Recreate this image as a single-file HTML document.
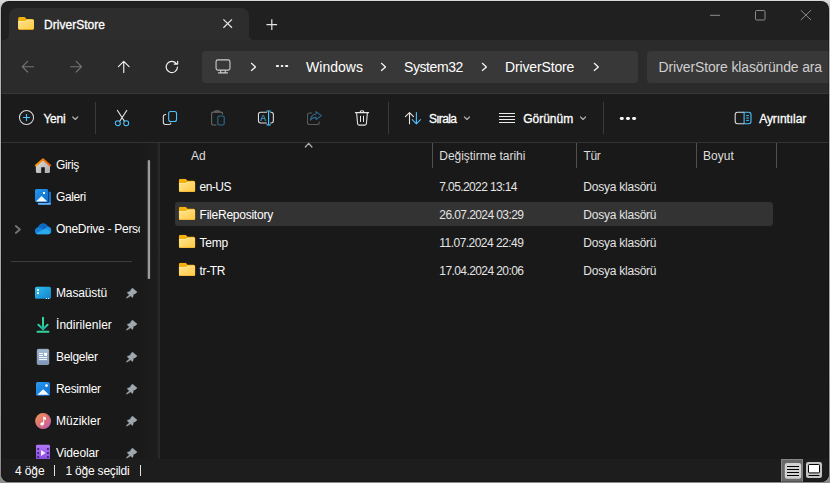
<!DOCTYPE html>
<html lang="tr">
<head>
<meta charset="utf-8">
<title>DriverStore</title>
<style>
html,body{margin:0;padding:0}
body{width:830px;height:483px;overflow:hidden;position:relative;background:linear-gradient(#dcdcdc 0,#d6d6d6 2px,#b8b8b8 10px,#b0b0b0 30%,#a4a4a4 70%,#8c8c8c 100%);font-family:'Liberation Sans',sans-serif}
.win{position:absolute;left:1px;top:1px;width:828px;height:480.5px;border-radius:8px;overflow:hidden;background:#202020}
.win:after{content:'';position:absolute;left:0;top:0;right:0;bottom:0;border-radius:8px;box-shadow:inset 0 0 0 1px rgba(0,0,0,.22);pointer-events:none}
.pg{position:absolute;left:-1px;top:-1px;width:830px;height:483px}
.pg *{position:absolute;box-sizing:border-box}
.t{white-space:pre;line-height:1;}
svg{overflow:visible}
.tab{left:9px;top:8px;width:240px;height:32px;background:#2d2d2d;border-radius:8px 8px 0 0}
.tabfl{top:35px;width:5px;height:5px;background:#2d2d2d}
.tabfl i{left:0;top:0;width:5px;height:5px;background:#202020}
.nav{left:0;top:40px;width:830px;height:53px;background:#2b2b2b}
.navline{left:0;top:93px;width:830px;height:1px;background:#373737}
.addr{left:202px;top:51px;width:436px;height:32px;background:#383838;border-radius:4px}
.search{left:647px;top:51px;width:200px;height:32px;background:#383838;border-radius:4px}
.cmd{left:0;top:94px;width:830px;height:48px;background:#1b1b1b}
.cmdline{left:0;top:142px;width:830px;height:1px;background:#333}
.vsep{width:1px;top:102px;height:32px;background:#3a3a3a}
.main{left:0;top:143px;width:830px;height:316px;background:#191919}
.side{left:139px;top:143px;width:20px;height:316px;background:linear-gradient(to right,#191919,#1e1e1e)}
.sidediv{left:158px;top:143px;width:2px;height:316px;background:#292929}
.thumb{left:148px;top:160px;width:2px;height:119px;background:#9a9a9a;border-radius:1px}
.sideline{left:11px;top:261px;width:121px;height:1px;background:#3d3d3d}
.hsep{width:1px;top:143px;height:25px;background:#505050}
.sel{left:175px;top:202px;width:598px;height:23.8px;background:#333;border-radius:3px}
.status{left:0;top:459px;width:830px;height:24px;background:#1d1d1d}
.bar{width:1px;top:465px;height:11px;background:#e0e0e0}
.vbtn{left:781px;top:459px;width:22px;height:24px;background:#696969;border:1px solid #868686}
</style>
</head>
<body>
<svg width="0" height="0" style="position:absolute">
 <defs>
  <linearGradient id="fg" x1="0" y1="0" x2="1" y2="1"><stop offset="0" stop-color="#ffe493"/><stop offset="1" stop-color="#ffc940"/></linearGradient>
  <symbol id="folder" viewBox="0 0 16.5 13.2">
   <path d="M0 1.7Q0 0 1.7 0H6.3Q7 0 7.4.5L8.6 2H14.8Q16.5 2 16.5 3.7V11.5Q16.5 13.2 14.8 13.2H1.7Q0 13.2 0 11.5Z" fill="#f2b10c"/>
   <path d="M0 4.2H6.9Q7.5 4.2 7.9 3.8L8.5 3.25Q8.9 2.95 9.4 2.95H14.8Q16.5 2.95 16.5 4.6V11.5Q16.5 13.2 14.8 13.2H1.7Q0 13.2 0 11.5Z" fill="url(#fg)"/>
   <path d="M0 4.2H6.9Q7.5 4.2 7.9 3.8L8.5 3.25Q8.9 2.95 9.4 2.95H14.8Q15.7 2.95 16.1 3.4Q15.7 3.4 14.8 3.4H9.5Q9.1 3.4 8.8 3.7L8.2 4.25Q7.8 4.65 7.1 4.65H0Z" fill="#fff2bc" opacity=".75"/>
   <path d="M0 11Q0 12.6 1.7 12.6H14.8Q16.5 12.6 16.5 11V11.5Q16.5 13.2 14.8 13.2H1.7Q0 13.2 0 11.5Z" fill="#eea412"/>
  </symbol>
  <symbol id="chev" viewBox="0 0 6 9"><path d="M1 .8L5.1 4.5L1 8.2" fill="none" stroke="#f2f2f2" stroke-width="1.3" stroke-linecap="round" stroke-linejoin="round"/></symbol>
  <symbol id="dchev" viewBox="0 0 7 5"><path d="M.95 1.1L3.45 3.6L5.95 1.1" fill="none" stroke="#a6a6a6" stroke-width="1.35" stroke-linecap="round" stroke-linejoin="round"/></symbol>
  <symbol id="pin" viewBox="0 0 12 12"><path d="M6.4 .4L11.2 4.6L9.3 6.2L7.65 6.8L6.6 10.15L4.55 8.5L.8 10.8L.2 9.95L3.3 7.45L1 5L4.35 3.5L5 1.9Z" fill="#9ea6ae" stroke="#9ea6ae" stroke-width=".3" stroke-linejoin="round"/></symbol>
 </defs>
</svg>
<div class="win"><div class="pg">

<!-- title bar / tab -->
<div class="tabfl" style="left:4px"><i style="border-radius:0 0 5px 0"></i></div>
<div class="tabfl" style="left:249px"><i style="border-radius:0 0 0 5px"></i></div>
<div class="tab"></div>
<svg style="left:18px;top:17px" width="18" height="14" viewBox="0 0 18 14"><use href="#folder" width="16.1" height="12.7" preserveAspectRatio="none"/></svg>
<span class="t" style="left:44.0px;top:18.84px;font-size:12px;color:#fff;letter-spacing:0.028px;-webkit-text-stroke:.3px #fff;">DriverStore</span>
<svg style="left:223px;top:19px" width="10" height="10" viewBox="0 0 10 10"><path d="M.4 .4L9 8.8M9 .4L.4 8.8" stroke="#e8e8e8" stroke-width="1.2" fill="none"/></svg>
<svg style="left:266px;top:19px" width="12" height="11" viewBox="-0.5 -0.3 12 11"><path d="M5.3 0V10.6M0 5.3H10.6" stroke="#e4e4e4" stroke-width="1.2" fill="none"/></svg>
<svg style="left:710px;top:10px" width="103" height="12" viewBox="0 0 103 12"><g stroke="#8c8c8c" stroke-width="1" fill="none"><path d="M0 5.3H10"/><rect x="45.5" y=".5" width="9.5" height="9.5" rx="1.1"/><path d="M90.8 .2L101 10M101 .2L90.8 10"/></g></svg>

<!-- navigation bar -->
<div class="nav"></div>
<div class="navline"></div>
<svg style="left:21px;top:60px" width="63" height="15" viewBox="0 0 63 15"><g stroke="#767676" stroke-width="1.15" fill="none" stroke-linecap="round" stroke-linejoin="round"><path d="M12.5 6.7H1.3M6.6 1.4L1.3 6.7L6.6 12"/><path d="M49.6 6.7H60.5M55.2 1.4L60.5 6.7L55.2 12"/></g></svg>
<svg style="left:117px;top:60px" width="63" height="15" viewBox="0 0 63 15"><g stroke="#f0f0f0" stroke-width="1.15" fill="none" stroke-linecap="round" stroke-linejoin="round"><path d="M6.75 12.4V1.4M1.4 6.7L6.75 1.4L12.1 6.7"/><path d="M60.5 7.1A5.65 5.65 0 1 1 59.6 3.9M60.65 1.2V4.1H57.2"/></g></svg>
<div class="addr"></div>
<svg style="left:215px;top:59px" width="16" height="15" viewBox="-0.5 -0.3 16 15"><g stroke="#cdcdcd" stroke-width="1.1" fill="none"><rect x=".55" y=".55" width="13.9" height="10.3" rx="1.8"/><path d="M5.2 10.9V13.5M9.8 10.9V13.5M2.6 13.6H12.4"/></g></svg>
<svg style="left:250px;top:62px" width="7" height="10" viewBox="-0.45 -0.4 7 10"><use href="#chev" width="6" height="9"/></svg>
<svg style="left:276px;top:64px" width="13" height="4" viewBox="0 -0.8 13 4"><g fill="#f0f0f0"><rect x="0" y=".2" width="2.9" height="2" rx=".5"/><rect x="4.9" y=".2" width="2.3" height="2" rx=".5"/><rect x="9.2" y=".2" width="2.9" height="2" rx=".5"/></g></svg>
<span class="t" style="left:306.0px;top:60.15px;font-size:14px;color:#fff;letter-spacing:0.029px;">Windows</span>
<svg style="left:380px;top:62px" width="7" height="10" viewBox="-0.45 -0.4 7 10"><use href="#chev" width="6" height="9"/></svg>
<span class="t" style="left:404.0px;top:60.15px;font-size:14px;color:#fff;letter-spacing:-0.406px;">System32</span>
<svg style="left:481px;top:62px" width="7" height="10" viewBox="-0.35 -0.4 7 10"><use href="#chev" width="6" height="9"/></svg>
<span class="t" style="left:505.0px;top:60.15px;font-size:14px;color:#fff;letter-spacing:-0.145px;">DriverStore</span>
<svg style="left:593px;top:62px" width="7" height="10" viewBox="-0.25 -0.4 7 10"><use href="#chev" width="6" height="9"/></svg>
<div class="search"></div>
<span class="t" style="left:658.5px;top:60.15px;font-size:14px;color:#cfcfcf;letter-spacing:-0.146px;">DriverStore klasöründe ara</span>

<!-- command bar -->
<div class="cmd"></div>
<div class="cmdline"></div>
<svg style="left:18px;top:109px" width="17" height="17" viewBox="-0.9 -0.9 17 17"><circle cx="7.6" cy="7.6" r="7.05" fill="none" stroke="#dcdcdc" stroke-width="1.05"/><path d="M7.6 4.5V10.7M4.5 7.6H10.7" stroke="#4cc2ff" stroke-width="1.15" fill="none" stroke-linecap="round"/></svg>
<span class="t" style="left:43.4px;top:112.64px;font-size:12px;color:#fff;letter-spacing:-0.230px;-webkit-text-stroke:.3px #fff;">Yeni</span>
<svg style="left:71px;top:115px" width="8" height="6" viewBox="-0.8 -0.8 8 6"><use href="#dchev" width="7" height="5"/></svg>
<div class="vsep" style="left:95px"></div>
<!-- cut -->
<svg style="left:114px;top:109px" width="16" height="18" viewBox="-0.5 -0.5 16 18"><g fill="none" stroke-width="1.05"><path d="M2.9 .9L9.9 11.6M12.3 .9L5.3 11.6" stroke="#dcdcdc" stroke-linecap="round"/><circle cx="3.3" cy="13.7" r="2.5" stroke="#4cc2ff"/><circle cx="11.7" cy="13.7" r="2.5" stroke="#4cc2ff"/></g></svg>
<!-- copy -->
<svg style="left:162px;top:110px" width="16" height="16" viewBox="-0.8 -0.5 16 16"><g fill="none" stroke-width="1.1"><path d="M3.4 4.05H2.7Q.55 4.05 .55 6.2V11.8Q.55 13.95 2.7 13.95H6.2Q8.15 13.95 8.15 12.2" stroke="#dcdcdc"/><rect x="5.85" y=".95" width="7.9" height="10" rx="2" stroke="#4cc2ff"/></g></svg>
<!-- paste (disabled) -->
<svg style="left:210px;top:110px" width="16" height="17" viewBox="-0.8 0 16 17"><g fill="none" stroke-width="1.05"><path d="M5.6 15H2.4Q.85 15 .85 13.5V3.6Q.85 2.1 2.4 2.1H10.2Q11.75 2.1 11.75 3.6V4.6" stroke="#6c6c6c"/><path d="M3.9 2.1Q3.9 .85 5.1 .85H7.5Q8.7 .85 8.7 2.1" stroke="#6c6c6c"/><rect x="7" y="5.9" width="6.4" height="9.1" rx="1.5" stroke="#2b6f95"/></g></svg>
<!-- rename -->
<svg style="left:257px;top:109px" width="18" height="18" viewBox="-0.5 -0.8 18 18"><g fill="none" stroke-width="1.1"><path d="M9.4 2.5H3.1Q.95 2.5 .95 4.7V11Q.95 13.2 3.1 13.2H9.4M12.8 2.5H13.7Q15.85 2.5 15.85 4.7V11Q15.85 13.2 13.7 13.2H12.8" stroke="#dcdcdc"/><path d="M9 1.2H13.2M9 15H13.2M11.1 1.2V15" stroke="#4cc2ff" stroke-width="1.2"/></g><text x="2.7" y="11" font-family="'Liberation Sans',sans-serif" font-size="8.8" fill="#4cc2ff">A</text></svg>
<!-- share (disabled) -->
<svg style="left:306px;top:110px" width="17" height="16" viewBox="-0.5 -0.5 17 16"><g fill="none" stroke-width="1.05" stroke-linejoin="round"><path d="M5.6 2.5H3.1Q1 2.5 1 4.6V11.9Q1 14 3.1 14H10.6Q12.7 14 12.7 11.9V11" stroke="#5c5c5c"/><path d="M9.6 1.1L14.9 5.1L9.6 9V6.9Q5.8 6.8 3.9 9.6Q4.4 4 9.6 3.4Z" stroke="#2a6b90"/></g></svg>
<!-- delete -->
<svg style="left:354px;top:109px" width="16" height="18" viewBox="-0.5 -0.8 16 18"><g fill="none" stroke="#e6e6e6" stroke-width="1.1" stroke-linecap="round"><path d="M.9 2.8H14.1M5.5 2.6Q5.5 .95 7.5 .95Q9.5 .95 9.5 2.6M2.1 3L3.1 14Q3.2 15.3 4.6 15.3H10.4Q11.8 15.3 11.9 14L12.9 3"/><path d="M6 6.4V11.7M9 6.4V11.7" stroke-width="1"/></g></svg>
<div class="vsep" style="left:388px"></div>
<!-- sort -->
<svg style="left:404px;top:111px" width="18" height="14" viewBox="-0.5 -0.6 18 14"><g fill="none" stroke-width="1.1" stroke-linecap="round" stroke-linejoin="round"><path d="M5 12.2V1M.9 5.1L5 1L9 5.1" stroke="#e6e6e6"/><path d="M11.9 1V12.2M7.8 8.1L11.9 12.2L16 8.1" stroke="#4cc2ff"/></g></svg>
<span class="t" style="left:428.9px;top:112.64px;font-size:12px;color:#fff;letter-spacing:-0.677px;-webkit-text-stroke:.3px #fff;">Sırala</span>
<svg style="left:463px;top:115px" width="8" height="6" viewBox="-0.5 -0.8 8 6"><use href="#dchev" width="7" height="5"/></svg>
<!-- view -->
<svg style="left:499px;top:113px" width="17" height="11" viewBox="0 0 17 11" shape-rendering="crispEdges"><path d="M0 .5H16M0 3.5H16M0 6.5H16M0 9.5H16" stroke="#e9e9e9" stroke-width="1" fill="none"/></svg>
<span class="t" style="left:523.2px;top:112.64px;font-size:12px;color:#fff;-webkit-text-stroke:.3px #fff;">Görünüm</span>
<svg style="left:579px;top:115px" width="8" height="6" viewBox="-0.6 -0.8 8 6"><use href="#dchev" width="7" height="5"/></svg>
<div class="vsep" style="left:603px"></div>
<svg style="left:619px;top:117px" width="18" height="4" viewBox="-0.8 0 18 4"><g fill="#f4f4f4"><rect x="0" y="0" width="4" height="3" rx="1.4"/><rect x="6.15" y="0" width="4" height="3" rx="1.4"/><rect x="12.3" y="0" width="4" height="3" rx="1.4"/></g></svg>
<!-- details pane -->
<svg style="left:734px;top:111px" width="18" height="14" viewBox="-0.6 -0.7 18 14"><g fill="none" stroke-width="1.1"><path d="M9.5 .6H3Q.6 .6 .6 3V9.6Q.6 12 3 12H9.5" stroke="#dcdcdc"/><path d="M9.5 .6V12H14Q16.4 12 16.4 9.6V3Q16.4 .6 14 .6Z" stroke="#4cc2ff"/><path d="M11.6 3.9H14.3M11.6 6.3H14.3M11.6 8.7H14.3" stroke="#4cc2ff" stroke-width="1"/></g></svg>
<span class="t" style="left:759.2px;top:112.64px;font-size:12px;color:#fff;letter-spacing:-0.080px;-webkit-text-stroke:.3px #fff;">Ayrıntılar</span>

<!-- main area -->
<div class="main"></div>
<div class="side">
</div>
<div class="sidediv"></div>
<svg style="left:147px;top:159px" width="4" height="121" viewBox="-0.7 -0.9 4 121"><rect width="2.4" height="119.2" rx="1.2" fill="#9c9c9c"/></svg>
<div class="sideline"></div>

<!-- sidebar icons -->
<svg style="left:34px;top:157px" width="18" height="17" viewBox="-0.5 -0.5 18 17"><defs><linearGradient id="hg" x1="0" y1="0" x2="1" y2="1"><stop offset="0" stop-color="#dedede"/><stop offset="1" stop-color="#a9a9a9"/></linearGradient><linearGradient id="hr" x1="0" y1="0" x2="1" y2="0"><stop offset="0" stop-color="#f59a00"/><stop offset="1" stop-color="#e8590a"/></linearGradient></defs><path d="M1.4 8L8.5 2L15.5 8V14.3Q15.5 15.4 14.4 15.4H10.3V9.7H6.7V15.4H2.5Q1.4 15.4 1.4 14.3Z" fill="url(#hg)"/><path d="M1.3 7.9L8.5 1.8L15.7 7.9" fill="none" stroke="url(#hr)" stroke-width="2" stroke-linecap="round" stroke-linejoin="round"/></svg>
<svg style="left:35px;top:189px" width="17" height="17" viewBox="0 0 17 17"><defs><linearGradient id="gg" x1="0" y1="0" x2="1" y2="1"><stop offset="0" stop-color="#2398ee"/><stop offset="1" stop-color="#0e6cc8"/></linearGradient></defs><rect x="2.6" y="2.4" width="13.4" height="13.4" rx="1.6" fill="#1276d2"/><path d="M3 14H16V14.4Q16 15.8 14.6 15.8H4.2Q3 15.8 3 14.6Z" fill="#63adf2"/><rect x=".8" y=".8" width="13.1" height="12.9" rx="1.6" fill="#08182c" opacity=".85"/><rect x="0" y="0" width="13.2" height="13" rx="1.6" fill="url(#gg)"/><path d="M1 12.6L6.6 7L12.3 12.6Z" fill="#f4f9ff"/><rect x="8" y="3" width="2" height="2" fill="#fff"/></svg>
<svg style="left:14px;top:224px" width="8" height="11" viewBox="-0.5 -0.7 8 11"><path d="M1.3 1.3L5.4 4.8L1.3 8.3" fill="none" stroke="#757575" stroke-width="1.8" stroke-linecap="round" stroke-linejoin="round"/></svg>
<svg style="left:34px;top:223px" width="18" height="12" viewBox="-0.8 -0.4 18 12"><path d="M2.8 10.8Q.1 10.6 .1 7.6Q.2 4.5 3.5 3.5Q5 .1 8.4 .1Q11.7 .1 12.9 3.1Q16.4 3.6 16.4 7.4Q16.3 10.6 13.6 10.8Z" fill="#147fd8"/><path d="M3.5 3.5Q5 .1 8.4 .1Q11.7 .1 12.9 3.1Q11.6 3.6 11.2 4.9L8.6 6.4L5.6 4.2Q4.6 3.5 3.5 3.5Z" fill="#0b67c2"/><path d="M12.9 3.1Q16.4 3.6 16.4 7.4L16.2 8.6L11.2 4.9Q11.7 3.5 12.9 3.1Z" fill="#1c93e4"/><path d="M1.1 9.9L11.2 4.9L16.2 8.6Q15.7 10.7 13.6 10.8H2.8Q1.7 10.8 1.1 9.9Z" fill="#2aa9ec"/></svg>
<svg style="left:35px;top:286px" width="17" height="14" viewBox="0 -0.8 17 14"><defs><linearGradient id="dg" x1="0" y1="0" x2="1" y2="1"><stop offset="0" stop-color="#2dc0ec"/><stop offset="1" stop-color="#1280cc"/></linearGradient></defs><rect width="16" height="12" rx="1.6" fill="url(#dg)"/><rect x="2" y="2.3" width="2" height="1.9" fill="#fff"/><rect x="2" y="5.4" width="2" height="1.9" fill="#fff"/><rect x="10.9" y="11.2" width="1.1" height="1" fill="#e8f4ff"/><rect x="13" y="11.2" width="1.1" height="1" fill="#e8f4ff"/></svg>
<svg style="left:36px;top:316px" width="14" height="18" viewBox="-0.5 -0.8 14 18"><defs><linearGradient id="dl" x1="0" y1="0" x2="0" y2="1"><stop offset="0" stop-color="#33dc98"/><stop offset=".55" stop-color="#2ccf9c"/><stop offset=".8" stop-color="#1ba2b2"/><stop offset=".86" stop-color="#2fd69a"/><stop offset="1" stop-color="#2fd69a"/></linearGradient></defs><path d="M6.5 .9V12.2M1.9 8L6.5 12.4L11.1 8M1 15H12" fill="none" stroke="url(#dl)" stroke-width="2" stroke-linecap="round" stroke-linejoin="round"/></svg>
<svg style="left:37px;top:349px" width="13" height="16" viewBox="0 0 13 16"><defs><linearGradient id="dc" x1="0" y1="0" x2="0" y2="1"><stop offset="0" stop-color="#a4bad4"/><stop offset="1" stop-color="#7c98ba"/></linearGradient></defs><rect x=".25" y=".25" width="11.5" height="15.3" rx="1.2" fill="url(#dc)" stroke="#bccde2" stroke-width=".6"/><path d="M2 4.5H5.9M2 6.5H5.9M2 8.6H10M2 10.6H10" stroke="#fff" stroke-width="1" fill="none"/><rect x="7.1" y="3.9" width="2.9" height="2.9" fill="#fff"/></svg>
<svg style="left:36px;top:382px" width="15" height="15" viewBox="0 0 15 15"><defs><linearGradient id="pg" x1="0" y1="0" x2="1" y2="1"><stop offset="0" stop-color="#2b9cf2"/><stop offset="1" stop-color="#0d6acc"/></linearGradient></defs><rect width="14" height="13.8" rx="1.6" fill="url(#pg)"/><path d="M1.3 12.8L7.2 7.2L13 12.8Z" fill="#f4f9ff"/><circle cx="10.5" cy="3.6" r="1.35" fill="#fff"/></svg>
<svg style="left:35px;top:413px" width="17" height="17" viewBox="0 0 17 17"><defs><linearGradient id="mg" x1=".1" y1=".1" x2=".9" y2=".95"><stop offset="0" stop-color="#f0905a"/><stop offset=".55" stop-color="#d86e78"/><stop offset="1" stop-color="#bc5eb8"/></linearGradient></defs><circle cx="8.1" cy="8.1" r="8" fill="url(#mg)"/><ellipse cx="7.1" cy="10.9" rx="1.8" ry="1.6" fill="#fff"/><path d="M8.2 11V3.6L11 4.6V6.9L9.1 6.2V11Z" fill="#fff"/></svg>
<svg style="left:36px;top:444px" width="15" height="16" viewBox="0 -0.8 15 16"><defs><linearGradient id="vg" x1="0" y1="0" x2="0" y2="1"><stop offset="0" stop-color="#b278f6"/><stop offset="1" stop-color="#8c4ee0"/></linearGradient></defs><path d="M0 1.4Q0 0 1.4 0H12.6Q14 0 14 1.4V14.2H0Z" fill="url(#vg)"/><g fill="#3d1f75"><rect x="1.3" y="3.3" width="1.8" height="1.8"/><rect x="1.3" y="7.3" width="1.8" height="1.8"/><rect x="1.3" y="11.3" width="1.8" height="1.8"/><rect x="11" y="3.3" width="1.8" height="1.8"/><rect x="11" y="7.3" width="1.8" height="1.8"/><rect x="11" y="11.3" width="1.8" height="1.8"/></g><path d="M5 5.2L9.6 8.2L5 11.2Z" fill="#f2ecff"/></svg>
<span class="t" style="left:56.0px;top:158.84px;font-size:12px;color:#fff;letter-spacing:-0.334px;">Giriş</span><span class="t" style="left:56.0px;top:190.84px;font-size:12px;color:#fff;letter-spacing:-0.386px;">Galeri</span><div style="left:56px;top:220px;width:84.3px;height:20px;overflow:hidden"><span class="t" style="left:0;top:2.84px;font-size:12px;color:#fff;letter-spacing:-0.28px">OneDrive - Personal</span></div>
<span class="t" style="left:56.0px;top:286.84px;font-size:12px;color:#fff;letter-spacing:-0.129px;">Masaüstü</span><span class="t" style="left:56.0px;top:318.84px;font-size:12px;color:#fff;letter-spacing:0.045px;">İndirilenler</span><span class="t" style="left:56.0px;top:350.84px;font-size:12px;color:#fff;letter-spacing:-0.304px;">Belgeler</span><span class="t" style="left:56.0px;top:382.84px;font-size:12px;color:#fff;letter-spacing:-0.330px;">Resimler</span><span class="t" style="left:56.0px;top:414.84px;font-size:12px;color:#fff;">Müzikler</span>
<div style="left:56px;top:440px;width:90px;height:19px;overflow:hidden"><span class="t" style="left:0.0px;top:6.84px;font-size:12px;color:#fff;letter-spacing:-0.102px;">Videolar</span></div>
<svg style="left:126px;top:287px" width="13" height="13" viewBox="0 -0.5 13 13"><use href="#pin" width="12" height="12"/></svg>
<svg style="left:126px;top:319px" width="13" height="13" viewBox="0 -0.5 13 13"><use href="#pin" width="12" height="12"/></svg>
<svg style="left:126px;top:351px" width="13" height="13" viewBox="0 -0.5 13 13"><use href="#pin" width="12" height="12"/></svg>
<svg style="left:126px;top:383px" width="13" height="13" viewBox="0 -0.5 13 13"><use href="#pin" width="12" height="12"/></svg>
<svg style="left:126px;top:415px" width="13" height="13" viewBox="0 -0.5 13 13"><use href="#pin" width="12" height="12"/></svg>
<div style="left:126px;top:447px;width:13px;height:12px;overflow:hidden"><svg style="left:0px;top:0px" width="13" height="13" viewBox="0 -0.5 13 13"><use href="#pin" width="12" height="12"/></svg></div>

<!-- file list header -->
<svg style="left:304px;top:142px" width="10" height="6" viewBox="-0.4 -0.5 10 6"><path d="M.95 4.5L4.25 .9L7.55 4.5" fill="none" stroke="#b4b4b4" stroke-width="1.2" stroke-linecap="round" stroke-linejoin="round"/></svg>
<span class="t" style="left:191.0px;top:149.84px;font-size:12px;color:#dedede;">Ad</span><span class="t" style="left:439.3px;top:149.84px;font-size:12px;color:#dedede;letter-spacing:-0.041px;">Değiştirme tarihi</span><span class="t" style="left:583.5px;top:149.84px;font-size:12px;color:#dedede;letter-spacing:-0.333px;">Tür</span><span class="t" style="left:703.0px;top:149.84px;font-size:12px;color:#dedede;letter-spacing:0.023px;">Boyut</span>
<div class="hsep" style="left:432px"></div>
<div class="hsep" style="left:576px"></div>
<div class="hsep" style="left:696px"></div>
<div class="hsep" style="left:776px"></div>

<!-- rows -->
<div class="sel"></div>
<svg style="left:178px;top:178px" width="18" height="15" viewBox="-0.8 -0.8 18 15"><use href="#folder" width="16.5" height="13.2"/></svg>
<svg style="left:178px;top:206px" width="18" height="15" viewBox="-0.8 -0.8 18 15"><use href="#folder" width="16.5" height="13.2"/></svg>
<svg style="left:178px;top:234px" width="18" height="15" viewBox="-0.8 -0.8 18 15"><use href="#folder" width="16.5" height="13.2"/></svg>
<svg style="left:178px;top:262px" width="18" height="15" viewBox="-0.8 -0.8 18 15"><use href="#folder" width="16.5" height="13.2"/></svg>
<span class="t" style="left:199.6px;top:180.64px;font-size:12px;color:#fff;letter-spacing:-0.543px;">en-US</span><span class="t" style="left:439.3px;top:180.64px;font-size:12px;color:#e4e4e4;letter-spacing:-0.610px;">7.05.2022 13:14</span><span class="t" style="left:583.3px;top:180.64px;font-size:12px;color:#e4e4e4;letter-spacing:-0.233px;">Dosya klasörü</span>
<span class="t" style="left:199.6px;top:208.64px;font-size:12px;color:#fff;letter-spacing:-0.243px;">FileRepository</span><span class="t" style="left:439.3px;top:208.64px;font-size:12px;color:#e4e4e4;letter-spacing:-0.589px;">26.07.2024 03:29</span><span class="t" style="left:583.3px;top:208.64px;font-size:12px;color:#e4e4e4;letter-spacing:-0.233px;">Dosya klasörü</span>
<span class="t" style="left:199.6px;top:236.64px;font-size:12px;color:#fff;letter-spacing:-0.261px;">Temp</span><span class="t" style="left:439.3px;top:236.64px;font-size:12px;color:#e4e4e4;letter-spacing:-0.533px;">11.07.2024 22:49</span><span class="t" style="left:583.3px;top:236.64px;font-size:12px;color:#e4e4e4;letter-spacing:-0.233px;">Dosya klasörü</span>
<span class="t" style="left:199.6px;top:264.64px;font-size:12px;color:#fff;letter-spacing:-0.366px;">tr-TR</span><span class="t" style="left:439.3px;top:264.64px;font-size:12px;color:#e4e4e4;letter-spacing:-0.589px;">17.04.2024 20:06</span><span class="t" style="left:583.3px;top:264.64px;font-size:12px;color:#e4e4e4;letter-spacing:-0.233px;">Dosya klasörü</span>

<!-- status bar -->
<div class="status"></div>
<span class="t" style="left:15.0px;top:464.84px;font-size:12px;color:#fff;letter-spacing:-0.106px;">4 öğe</span><div class="bar" style="left:54px"></div><span class="t" style="left:65.5px;top:464.84px;font-size:12px;color:#fff;letter-spacing:-0.209px;">1 öğe seçildi</span><div class="bar" style="left:140px"></div>
<div class="vbtn"></div>
<svg style="left:784px;top:463px" width="18" height="16" viewBox="-0.8 0 18 16"><rect width="16.4" height="15.8" rx="2.2" fill="#d2d2d2"/><path d="M2.2 3.5H14.2M2.2 6.5H14.2M2.2 9.5H14.2M2.2 12.5H14.2" stroke="#000" stroke-width="1" fill="none"/></svg>
<svg style="left:806px;top:462px" width="17" height="17" viewBox="0 0 17 17"><rect width="16" height="16" rx="2.2" fill="#c4c4c4"/><rect x="2.5" y="2.5" width="11" height="8.4" rx=".8" fill="#fff" stroke="#000" stroke-width="1"/><path d="M2.6 13.5H13.4" stroke="#000" stroke-width="1" fill="none"/></svg>

</div></div>
</body>
</html>
